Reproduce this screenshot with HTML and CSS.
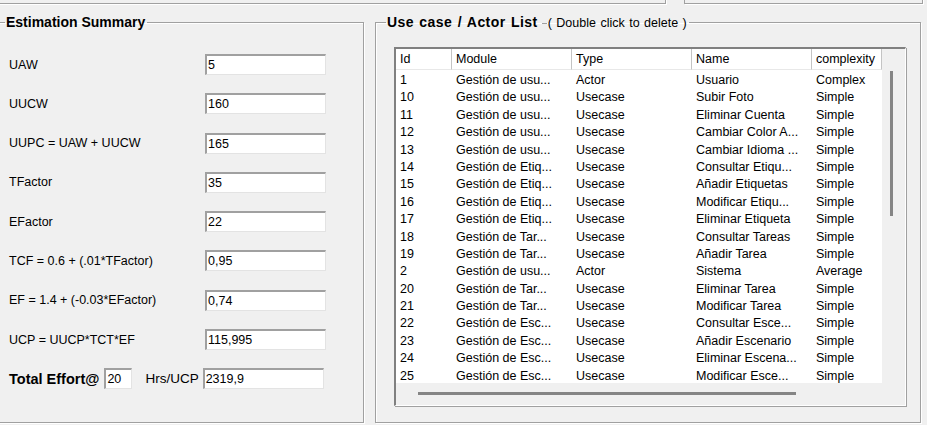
FILE: index.html
```html
<!DOCTYPE html>
<html>
<head>
<meta charset="utf-8">
<link rel="stylesheet" href="styles.css">
</head>
<body>
<div class="top">
  <div class="topbox box-a"></div>
  <div class="topbox box-b"></div>
</div>
<div class="main">
  <fieldset class="group est">
    <legend class="legend">Estimation Summary</legend>
    <div class="fields">
      <div class="row"><span class="lbl">UAW</span><div class="inp">5</div></div>
      <div class="row"><span class="lbl">UUCW</span><div class="inp">160</div></div>
      <div class="row"><span class="lbl">UUPC = UAW + UUCW</span><div class="inp">165</div></div>
      <div class="row"><span class="lbl">TFactor</span><div class="inp">35</div></div>
      <div class="row"><span class="lbl">EFactor</span><div class="inp">22</div></div>
      <div class="row"><span class="lbl">TCF = 0.6 + (.01*TFactor)</span><div class="inp">0,95</div></div>
      <div class="row"><span class="lbl">EF = 1.4 + (-0.03*EFactor)</span><div class="inp">0,74</div></div>
      <div class="row"><span class="lbl">UCP = UUCP*TCT*EF</span><div class="inp">115,995</div></div>
      <div class="row total">
        <span class="lbl bold">Total Effort@</span>
        <div class="inp small">20</div>
        <span class="lbl hrs">Hrs/UCP</span>
        <div class="inp">2319,9</div>
      </div>
    </div>
  </fieldset>
  <fieldset class="group uc">
    <legend class="legend"><span class="bold uctitle">Use case / Actor List</span><span class="dash"></span><span class="note">( Double click to delete )</span></legend>
    <div class="list">
      <div class="content">
        <div class="lrow head">
          <span class="c hc">Id</span><span class="c hc">Module</span><span class="c hc">Type</span><span class="c hc">Name</span><span class="c hc">complexity</span>
        </div>
        <div class="rows">
          <div class="lrow"><span class="c">1</span><span class="c">Gestión de usu...</span><span class="c">Actor</span><span class="c">Usuario</span><span class="c">Complex</span></div>
          <div class="lrow"><span class="c">10</span><span class="c">Gestión de usu...</span><span class="c">Usecase</span><span class="c">Subir Foto</span><span class="c">Simple</span></div>
          <div class="lrow"><span class="c">11</span><span class="c">Gestión de usu...</span><span class="c">Usecase</span><span class="c">Eliminar Cuenta</span><span class="c">Simple</span></div>
          <div class="lrow"><span class="c">12</span><span class="c">Gestión de usu...</span><span class="c">Usecase</span><span class="c">Cambiar Color A...</span><span class="c">Simple</span></div>
          <div class="lrow"><span class="c">13</span><span class="c">Gestión de usu...</span><span class="c">Usecase</span><span class="c">Cambiar Idioma ...</span><span class="c">Simple</span></div>
          <div class="lrow"><span class="c">14</span><span class="c">Gestión de Etiq...</span><span class="c">Usecase</span><span class="c">Consultar Etiqu...</span><span class="c">Simple</span></div>
          <div class="lrow"><span class="c">15</span><span class="c">Gestión de Etiq...</span><span class="c">Usecase</span><span class="c">Añadir Etiquetas</span><span class="c">Simple</span></div>
          <div class="lrow"><span class="c">16</span><span class="c">Gestión de Etiq...</span><span class="c">Usecase</span><span class="c">Modificar Etiqu...</span><span class="c">Simple</span></div>
          <div class="lrow"><span class="c">17</span><span class="c">Gestión de Etiq...</span><span class="c">Usecase</span><span class="c">Eliminar Etiqueta</span><span class="c">Simple</span></div>
          <div class="lrow"><span class="c">18</span><span class="c">Gestión de Tar...</span><span class="c">Usecase</span><span class="c">Consultar Tareas</span><span class="c">Simple</span></div>
          <div class="lrow"><span class="c">19</span><span class="c">Gestión de Tar...</span><span class="c">Usecase</span><span class="c">Añadir Tarea</span><span class="c">Simple</span></div>
          <div class="lrow"><span class="c">2</span><span class="c">Gestión de usu...</span><span class="c">Actor</span><span class="c">Sistema</span><span class="c">Average</span></div>
          <div class="lrow"><span class="c">20</span><span class="c">Gestión de Tar...</span><span class="c">Usecase</span><span class="c">Eliminar Tarea</span><span class="c">Simple</span></div>
          <div class="lrow"><span class="c">21</span><span class="c">Gestión de Tar...</span><span class="c">Usecase</span><span class="c">Modificar Tarea</span><span class="c">Simple</span></div>
          <div class="lrow"><span class="c">22</span><span class="c">Gestión de Esc...</span><span class="c">Usecase</span><span class="c">Consultar Esce...</span><span class="c">Simple</span></div>
          <div class="lrow"><span class="c">23</span><span class="c">Gestión de Esc...</span><span class="c">Usecase</span><span class="c">Añadir Escenario</span><span class="c">Simple</span></div>
          <div class="lrow"><span class="c">24</span><span class="c">Gestión de Esc...</span><span class="c">Usecase</span><span class="c">Eliminar Escena...</span><span class="c">Simple</span></div>
          <div class="lrow"><span class="c">25</span><span class="c">Gestión de Esc...</span><span class="c">Usecase</span><span class="c">Modificar Esce...</span><span class="c">Simple</span></div>
        </div>
      </div>
      <div class="vscroll"><div class="vthumb"></div></div>
      <div class="hscroll"><div class="hthumb"></div></div>
    </div>
  </fieldset>
</div>
</body>
</html>
```
FILE: styles.css
```css
html, body {
  margin: 0;
  padding: 0;
}
body {
  width: 927px;
  height: 425px;
  overflow: hidden;
  background: #f0f0f0;
  font-family: "Liberation Sans", Arial, sans-serif;
  font-size: 12px;
  color: #000;
}
.top {
  display: flex;
  height: 3px;
}
.topbox {
  height: 10px;
  margin-top: -8px;
  border: 1px solid #a0a0a0;
  box-shadow: 1px 1px 0 #fff;
}
.box-a {
  width: 670px;
  margin-left: -6px;
}
.box-b {
  width: 237px;
  margin-left: 18px;
}
.main {
  display: flex;
  margin-top: 11px;
}
.group {
  margin: 0;
  padding: 0;
  border: 1px solid #a0a0a0;
  box-shadow: inset 1px 1px 0 #fff, 1px 1px 0 #fff;
  min-width: 0;
  box-sizing: border-box;
}
.legend {
  margin-left: 4px;
  padding: 0 2px 0 1px;
  font-size: 14px;
  line-height: 16px;
}
.bold {
  font-weight: bold;
}
.est {
  width: 366px;
  height: 409px;
  margin-left: -2px;
}
.uc {
  width: 546px;
  height: 409px;
  margin-left: 11px;
}
.est .legend {
  font-weight: bold;
  margin-left: 6px;
}
.fields {
  display: flex;
  flex-direction: column;
  gap: 18.3px;
  padding: 24px 0 0 10px;
}
.row {
  display: flex;
  align-items: center;
  height: 21px;
}
.lbl {
  width: 196px;
  font-size: 12.5px;
}
.inp {
  width: 117px;
  height: 18px;
  background: #fff;
  border-top: 2px solid #a0a0a0;
  border-left: 2px solid #a0a0a0;
  border-bottom: 1px solid #e3e3e3;
  border-right: 1px solid #e3e3e3;
  font-size: 12.5px;
  line-height: 19px;
  padding-left: 1px;
  box-sizing: content-box;
}
.total .lbl.bold {
  width: auto;
  font-size: 14.5px;
}
.inp.small {
  width: 24px;
  margin-left: 5px;
}
.hrs {
  width: auto;
  font-size: 13.5px;
  margin-left: 13px;
  margin-right: 4px;
}
.uc .legend {
  margin-left: 10px;
}
.uctitle {
  word-spacing: 1px;
  letter-spacing: 0.45px;
}
.dash {
  display: inline-block;
  width: 5px;
  height: 1px;
  background: #a0a0a0;
  vertical-align: middle;
  margin: 0 1px 0 4px;
}
.note {
  font-weight: normal;
  font-size: 12.5px;
  word-spacing: 1px;
}
.list {
  position: relative;
  margin: 16px 0 0 18px;
  width: 509px;
  height: 356px;
  border-top: 2px solid #808080;
  border-left: 2px solid #808080;
  border-bottom: 1px solid #fff;
  border-right: 1px solid #fff;
  box-shadow: 1px 1px 0 #a0a0a0;
  background: #f0f0f0;
}
.content {
  width: 486px;
  height: 334px;
  background: #fff;
  overflow: hidden;
  font-size: 12.5px;
}
.lrow {
  display: grid;
  grid-template-columns: 56px 120px 120px 120px 70px;
  height: 17.4px;
  line-height: 17.4px;
}
.c {
  padding-left: 4px;
  white-space: nowrap;
  overflow: hidden;
}
.head {
  height: 21px;
  line-height: 21px;
  margin-bottom: 2px;
}
.hc {
  border-right: 1px solid #c4c4c4;
  border-bottom: 1px solid #e8e8e8;
}
.vscroll {
  position: absolute;
  left: 494px;
  top: 22px;
  width: 3px;
  height: 145px;
}
.vthumb {
  width: 3px;
  height: 100%;
  background: #858585;
}
.hscroll {
  position: absolute;
  left: 22px;
  top: 343px;
  width: 378px;
  height: 3px;
}
.hthumb {
  width: 100%;
  height: 3px;
  background: #858585;
}
```
